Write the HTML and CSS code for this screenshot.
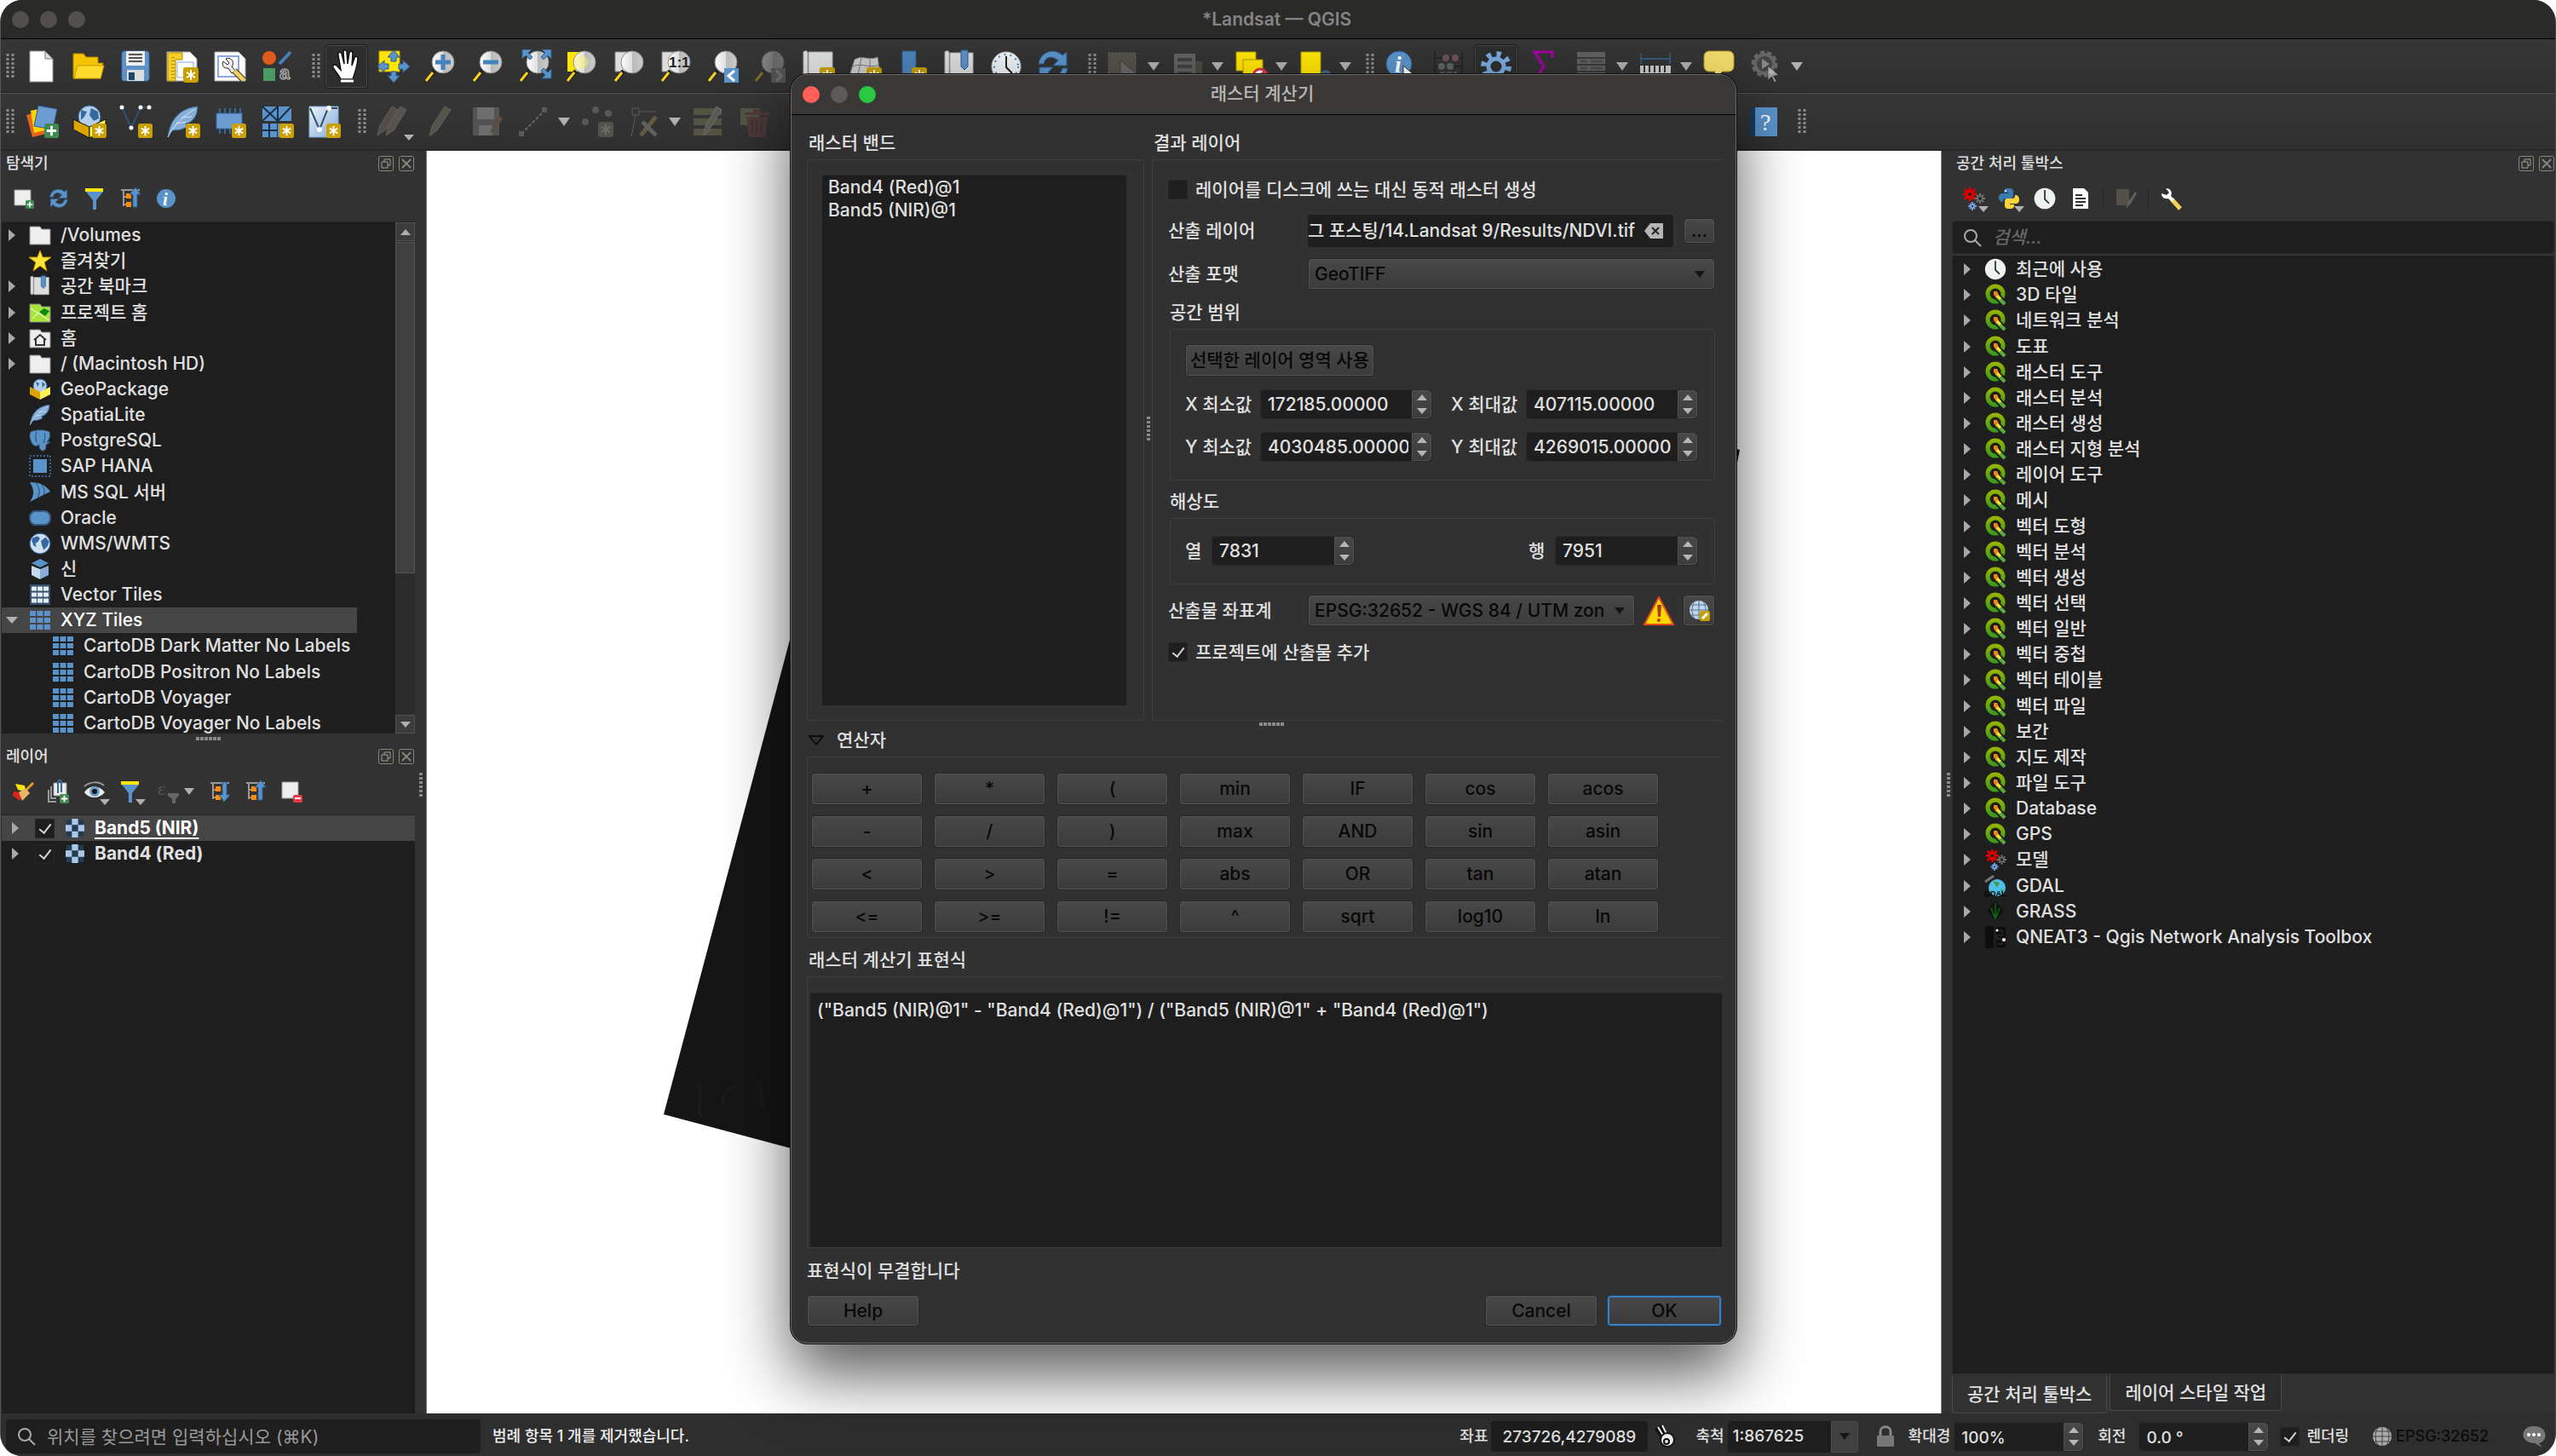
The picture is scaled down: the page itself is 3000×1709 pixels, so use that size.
FILE: index.html
```html
<!DOCTYPE html>
<html lang="ko">
<head>
<meta charset="utf-8">
<title>*Landsat — QGIS</title>
<meta name="viewport" content="width=device-width, initial-scale=1">
<link rel="stylesheet" href="styles.css">
</head>
<body>
<svg class="defs" aria-hidden="true">
  <defs>
    <linearGradient id="gLens" x1="0" x2="1"><stop offset="0" stop-color="#fff"/><stop offset=".5" stop-color="#ddd"/><stop offset=".52" stop-color="#b9b9b9"/><stop offset="1" stop-color="#ccc"/></linearGradient>
    <linearGradient id="gQ" x1="0" y1="0" x2="0" y2="1"><stop offset="0" stop-color="#93b300"/><stop offset="1" stop-color="#3f9a1c"/></linearGradient>
    <linearGradient id="gSky" x1="0" y1="0" x2="1" y2="1"><stop offset="0" stop-color="#eef4fb"/><stop offset="1" stop-color="#7fa9d6"/></linearGradient>
  </defs>
  <symbol id="grip" viewBox="0 0 10 30"><path d="M2 0v30M8 0v30" stroke="#8b8b8b" stroke-width="3" stroke-dasharray="3 2"/></symbol>
  <symbol id="badge" viewBox="0 0 18 18"><rect width="18" height="18" rx="3" fill="#c9a000"/><path d="M9 3v12M4 6l10 6M14 6l-10 6" stroke="#fff" stroke-width="2"/></symbol>
  <symbol id="plus" viewBox="0 0 18 18"><rect width="18" height="18" rx="3" fill="#3f8a50"/><path d="M9 3v12M3 9h12" stroke="#fff" stroke-width="3"/></symbol>
  <symbol id="lens" viewBox="0 0 40 40"><path d="M3 37L13 25" stroke="#222" stroke-width="5"/><path d="M3 37L11 27" stroke="#fcd21c" stroke-width="3"/><circle cx="23" cy="15" r="13" fill="url(#gLens)" stroke="#8d8d8d"/></symbol>
  <symbol id="globe" viewBox="0 0 24 24"><circle cx="12" cy="12" r="11" fill="#cfe0f3" stroke="#2d5f94"/><path d="M4 6l5-2 3 2-2 4-3 2 1 4-3-2-2-5zM13 9l5-4 4 5-2 5-4 4-2-5z" fill="#35689d"/></symbol>
  <symbol id="cursor" viewBox="0 0 16 22"><path d="M1 1l14 12-7 1 4 6-3 2-3-7-5 4z" fill="#fff" stroke="#333"/></symbol>

  <symbol id="new" viewBox="0 0 40 40"><path d="M7 2h18l9 9v27H7z" fill="#fff" stroke="#999"/><path d="M25 2v9h9z" fill="#ddd" stroke="#777"/></symbol>
  <symbol id="open" viewBox="0 0 40 40"><path d="M3 34V5h12l3 4h14v7l6 0-3 18z" fill="#f5c400" stroke="#b18a00"/><path d="M4 34l4-15h31l-4 15z" fill="#ffdb2e" stroke="#c79c00"/></symbol>
  <symbol id="save" viewBox="0 0 40 40"><rect x="4" y="2" width="32" height="35" rx="3" fill="#5f93c8" stroke="#3b6ea3"/><rect x="9" y="2" width="22" height="17" fill="#eee"/><path d="M12 6h16M12 10h16M12 14h16" stroke="#555" stroke-width="2"/><rect x="10" y="24" width="20" height="13" fill="#ddd"/><rect x="12" y="27" width="7" height="9" fill="#1f4469"/></symbol>
  <symbol id="layout" viewBox="0 0 40 40"><path d="M2 3h27l8 8v26H2z" fill="#fff" stroke="#aaa"/><path d="M3 4h17v8h-8v25H3z" fill="#f8cf2a" stroke="#b18a00"/><path d="M14 15h19v18H14z" fill="none" stroke="#8aa8e8"/><path d="M9 9v26" stroke="#b18a00" stroke-width="4" stroke-dasharray="1 3"/><use href="#badge" x="21" y="21" width="18" height="18"/></symbol>
  <symbol id="layouts" viewBox="0 0 40 40"><path d="M2 3h28l8 8v26H2z" fill="#fff" stroke="#aaa"/><path d="M6 8h24v24H6z" fill="none" stroke="#8aa8e8" stroke-width="2"/><path d="M15 11c7-3 11 5 7 9l4 5-4 3-4-6c-6 1-8-4-6-8l5 4 2-2z" fill="#eee" stroke="#222"/><path d="M25 25l11 11" stroke="#333" stroke-width="7"/><path d="M25 25l11 11" stroke="#f3d35a" stroke-width="5"/></symbol>
  <symbol id="style" viewBox="0 0 40 40"><circle cx="11" cy="10" r="8" fill="#df5a1d"/><path d="M23 17L36 3" stroke="#4580b8" stroke-width="4"/><rect x="4" y="22" width="14" height="15" fill="#4b9a66"/></symbol>
  <symbol id="hand" viewBox="0 0 40 40"><path d="M13 35c-2-4-7-10-9-14-1-3 2-4 4-2l5 5L10 7c-1-4 3-5 4-2l3 12-1-14c0-3 4-3 4 0l1 14 2-13c1-3 4-2 4 1l-1 14 3-9c1-3 4-2 4 1-1 10-3 15-6 24z" fill="#fff" stroke="#111" stroke-width="1.500"/><path d="M13 37h15" stroke="#fff" stroke-width="3"/></symbol>
  <symbol id="pansel" viewBox="0 0 40 40"><path d="M3 2h24v24H3z" fill="#ffe600" stroke="#c9a000"/><path d="M20 1l7 8h-4v5h-6V9h-4zM20 39l7-8h-4v-5h-6v5h-4zM1 20l8-7v4h5v6H9v4zM39 20l-8-7v4h-5v6h5v4z" fill="#5a93c9" stroke="#2c5c8e"/></symbol>
  <symbol id="zin" viewBox="0 0 40 40"><use href="#lens"/><path d="M23 6v18M14 15h18" stroke="#4682bd" stroke-width="5"/></symbol>
  <symbol id="zout" viewBox="0 0 40 40"><use href="#lens"/><path d="M14 15h18" stroke="#4682bd" stroke-width="5"/></symbol>
  <symbol id="zfull" viewBox="0 0 40 40"><use href="#lens"/><path d="M5 0h11l-4 4 5 5-3 3-5-5-4 4zM39 0v11l-4-4-5 5-3-3 5-5-4-4zM39 34H28l4-4-5-5 3-3 5 5 4-4z" fill="#5a93c9" stroke="#2c5c8e"/></symbol>
  <symbol id="zsel" viewBox="0 0 40 40"><path d="M3 3h22v23H3z" fill="#ffe600"/><use href="#lens"/><circle cx="19" cy="15" r="8" fill="#fff36b" opacity=".5"/></symbol>
  <symbol id="zlayer" viewBox="0 0 40 40"><path d="M3 3h22v23H3z" fill="#ddd" stroke="#888"/><use href="#lens"/></symbol>
  <symbol id="zlast" viewBox="0 0 40 40"><use href="#lens"/><rect x="21" y="22" width="17" height="17" fill="#5a93c9"/><path d="M33 25l-7 6 7 6" stroke="#fff" stroke-width="3" fill="none"/></symbol>
  <symbol id="znext" viewBox="0 0 40 40"><use href="#lens"/><rect x="21" y="22" width="17" height="17" fill="#888"/><path d="M27 25l6 6-6 6" stroke="#ccc" stroke-width="3" fill="none"/></symbol>
  <symbol id="mapnew" viewBox="0 0 40 40"><path d="M3 3c4-3 5 0 5 2v28c-3 4-5 1-5-1zM9 3h28v32H9z" fill="#ddd" stroke="#aaa"/><use href="#badge" x="22" y="21" width="18" height="18"/></symbol>
  <symbol id="map3d" viewBox="0 0 40 40"><path d="M8 12c8-6 18 2 27-3l3 20c-12 5-22-3-36 2z" fill="#ccc" stroke="#888"/><path d="M6 20c10-5 20 3 31-2M16 10l-4 20M26 11v20" stroke="#777" fill="none"/><use href="#badge" x="22" y="21" width="18" height="18"/></symbol>
  <symbol id="bmnew" viewBox="0 0 40 40"><path d="M9 2h16v32l-8-5-8 5z" fill="#4c83b9" stroke="#2c5c8e"/><use href="#badge" x="20" y="21" width="18" height="18"/></symbol>
  <symbol id="bm" viewBox="0 0 40 40"><path d="M3 3c4-3 5 0 5 2v28c-3 4-5 1-5-1zM9 4h27v31H9z" fill="#ddd" stroke="#aaa"/><path d="M22 1h8v19l-4 4-4-4z" fill="#5a93c9" stroke="#2c5c8e"/></symbol>
  <symbol id="clock" viewBox="0 0 40 40"><circle cx="20" cy="20" r="17" fill="#eef2f2" stroke="#bbb"/><path d="M20 8v13l7 7" fill="none" stroke="#222" stroke-width="2"/><circle cx="20" cy="20" r="14" fill="none" stroke="#4682bd" stroke-width="2" stroke-dasharray="2 5"/></symbol>
  <symbol id="refresh" viewBox="0 0 40 40"><path d="M3 17C5 2 22-2 31 7l5-4v16H20l6-6C19 7 11 8 9 17z" fill="#5a93c9" stroke="#2c5c8e"/><path d="M37 22C35 37 18 42 9 32l-5 4V21h16l-6 6c7 6 15 4 17-5z" fill="#5a93c9" stroke="#2c5c8e"/></symbol>
  <symbol id="select" viewBox="0 0 40 40"><path d="M3 4h32v28H3z" fill="#8a836b" stroke="#bbb" stroke-dasharray="2 2"/><path d="M17 13l20 16-9 1 4 8-5 2-4-8-6 5z" fill="#bbb" stroke="#555"/></symbol>
  <symbol id="form" viewBox="0 0 40 40"><path d="M26 14h12v22H26z" fill="#77705a"/><path d="M5 5h25v31H5z" fill="#aaa"/><path d="M9 12h17M9 20h17M9 28h17" stroke="#555" stroke-width="4"/></symbol>
  <symbol id="desel" viewBox="0 0 40 40"><path d="M3 3h23v22H3z" fill="#ffe600" stroke="#b19a00"/><path d="M11 12h23v22H11z" fill="#ffe600" stroke="#b19a00"/><circle cx="31" cy="31" r="8" fill="#fff" stroke="#dc3545" stroke-width="3"/><path d="M26 36l10-10" stroke="#dc3545" stroke-width="3"/></symbol>
  <symbol id="selval" viewBox="0 0 40 40"><path d="M4 3h23v30H4z" fill="#ffe600" stroke="#b19a00"/><circle cx="33" cy="31" r="5" fill="none" stroke="#3f6f9c" stroke-width="3"/></symbol>
  <symbol id="abacus" viewBox="0 0 40 40"><path d="M4 2v36M36 2v36M4 10h32M4 20h32M4 30h32" stroke="#111" stroke-width="2"/><circle cx="17" cy="10" r="4" fill="#b8a"/><circle cx="28" cy="10" r="4" fill="#c88"/><circle cx="12" cy="20" r="4" fill="#9ba"/><circle cx="22" cy="20" r="4" fill="#9ba"/><path d="M10 30h20" stroke="#888" stroke-width="8" stroke-dasharray="6 2"/></symbol>
  <symbol id="gear" viewBox="0 0 40 40"><circle cx="20" cy="20" r="14" fill="none" stroke="#78aade" stroke-width="8" stroke-dasharray="5 6"/><circle cx="20" cy="20" r="9" fill="#2d2d2d" stroke="#78aade" stroke-width="5"/></symbol>
  <symbol id="sigma" viewBox="0 0 40 40"><path d="M30 10V3H9l11 17L9 37h21v-7" fill="none" stroke="#a800a8" stroke-width="3"/></symbol>
  <symbol id="table" viewBox="0 0 40 40"><path d="M3 3h33v34H3z" fill="#aaa"/><path d="M3 10h33M3 18h33M3 26h33" stroke="#444" stroke-width="2"/><path d="M7 14h8M19 14h14M7 22h8M19 22h14M7 30h8M19 30h14" stroke="#777" stroke-width="3"/></symbol>
  <symbol id="ruler" viewBox="0 0 40 40"><path d="M3 5v12M37 5v12M3 11h34" stroke="#34577a" stroke-width="2"/><path d="M2 19h36v14H2z" fill="#ccc"/><path d="M7 19v8M13 19v8M19 19v8M25 19v8M31 19v8" stroke="#333" stroke-width="2"/></symbol>
  <symbol id="tip" viewBox="0 0 40 40"><rect x="2" y="2" width="35" height="24" rx="6" fill="#f2dc6b" stroke="#b59a20"/><path d="M15 25v12l9-12z" fill="#f2dc6b"/><circle cx="10" cy="36" r="4" fill="#8bc28b"/></symbol>
  <symbol id="action" viewBox="0 0 40 40"><circle cx="18" cy="17" r="13" fill="#666" stroke="#666" stroke-width="5" stroke-dasharray="5 3"/><circle cx="18" cy="17" r="9" fill="#444"/><path d="M15 11l9 6-9 6z" fill="#888"/><use href="#cursor" x="21" y="18" width="15" height="21" opacity=".5"/></symbol>

  <symbol id="source" viewBox="0 0 40 40"><path d="M1 12l14-4 9 26-16 4z" fill="#e8641b"/><path d="M6 7l14-3 6 25-16 4z" fill="#ffd400"/><path d="M15 1l22 4-5 24-22-4z" fill="#6b9bd0" stroke="#2c5c8e"/><use href="#plus" x="22" y="22" width="17" height="17"/></symbol>
  <symbol id="gpkg" viewBox="0 0 40 40"><circle cx="20" cy="14" r="13" fill="#b5cfea" stroke="#35689d"/><path d="M10 6l7 2-3 6-4 4zM22 4l8 4 1 8-6 3-5-7z" fill="#35689d"/><path d="M1 17l19 9v13L1 29z" fill="#dba400" stroke="#111"/><path d="M39 17l-19 9v13l19-10z" fill="#fff35c" stroke="#111"/><use href="#badge" x="23" y="22" width="17" height="17"/></symbol>
  <symbol id="shp" viewBox="0 0 40 40"><path d="M3 3l11 24L25 3h11" fill="none" stroke="#31506d" stroke-width="2"/><circle cx="3" cy="3" r="2.500" fill="#fff"/><circle cx="14" cy="27" r="2.500" fill="#fff"/><circle cx="25" cy="3" r="2.500" fill="#fff"/><circle cx="35" cy="3" r="2.500" fill="#fff"/><use href="#badge" x="22" y="22" width="17" height="17"/></symbol>
  <symbol id="feather" viewBox="0 0 40 40"><path d="M2 38C4 20 14 4 37 2c0 10-5 16-10 19l-4 1 1 4c-6 4-12 4-17 4z" fill="#86add6" stroke="#35689d"/><path d="M2 38C8 26 18 14 34 5M12 22l12-2M18 15l12-1" fill="none" stroke="#d8e6f4"/></symbol>
  <symbol id="feathernew" viewBox="0 0 40 40"><use href="#feather"/><use href="#badge" x="23" y="22" width="17" height="17"/></symbol>
  <symbol id="chip" viewBox="0 0 40 40"><path d="M8 4v30M14 4v30M20 4v30M26 4v30M32 4v30" stroke="#35689d" stroke-width="2"/><rect x="4" y="10" width="30" height="18" fill="#6b9bd0" stroke="#35689d"/><use href="#badge" x="22" y="22" width="17" height="17"/></symbol>
  <symbol id="mesh" viewBox="0 0 40 40"><path d="M3 2h34v17H3zM3 22h17v16H3zM21 22h16v16H21z" fill="#5a93c9"/><path d="M3 2l18 17M21 2L3 19M21 19L37 2M21 2v17M3 30h18M11 22v16" stroke="#17304a" stroke-width="2"/><use href="#badge" x="23" y="22" width="17" height="17"/></symbol>
  <symbol id="virt" viewBox="0 0 40 40"><path d="M3 2h34v36H3z" fill="url(#gSky)" stroke="#7fa9d6"/><path d="M4 4l11 25L25 4h11" fill="none" stroke="#31506d" stroke-width="2"/><circle cx="15" cy="29" r="3" fill="#fff"/><circle cx="26" cy="4" r="3" fill="#fff"/><use href="#badge" x="23" y="22" width="17" height="17"/></symbol>
  <symbol id="pencil" viewBox="0 0 40 40"><path d="M8 37l3-12L26 2l7 4-16 24z" fill="#8b8a70" stroke="#aaa"/></symbol>
  <symbol id="pencils" viewBox="0 0 40 40"><path d="M2 36l3-12L19 2l7 4-15 24z" fill="#8d7566" stroke="#aaa"/><path d="M12 36l3-12L29 2l7 4-15 24z" fill="#978376" stroke="#aaa"/></symbol>
  <symbol id="saveed" viewBox="0 0 40 40"><path d="M4 3h31v33H4z" fill="#888"/><path d="M9 3h20v14H9zM11 24h16v12H11z" fill="#ccc"/><path d="M24 34l3-9 8-12 4 3-8 13z" fill="#a07a60"/></symbol>
  <symbol id="line" viewBox="0 0 40 40"><path d="M6 34L33 7" stroke="#bbb" stroke-width="2" stroke-dasharray="4 2"/><path d="M3 31h6v6H3zM30 3h6v6h-6z" fill="#999"/></symbol>
  <symbol id="points" viewBox="0 0 40 40"><circle cx="6" cy="20" r="4" fill="#8a9a90"/><circle cx="18" cy="6" r="4" fill="#8a9a90"/><circle cx="33" cy="10" r="4" fill="#8a9a90"/><rect x="21" y="20" width="18" height="18" rx="3" fill="#8b8a70"/><path d="M30 23v12M25 26l10 6M35 26l-10 6" stroke="#ccc" stroke-width="2"/></symbol>
  <symbol id="tools" viewBox="0 0 40 40"><path d="M6 4h8v8H6zM14 8h20M10 12L5 37" stroke="#999" stroke-width="1" fill="none"/><path d="M16 36l18-22" stroke="#b09a60" stroke-width="5"/><path d="M34 36L18 20" stroke="#aaa" stroke-width="5"/></symbol>
  <symbol id="rows" viewBox="0 0 40 40"><path d="M3 4h33v8H3zM3 16h33v8H3zM3 28h33v8H3z" fill="#8b8a60"/><path d="M15 36l2-11L30 2l6 4-15 24z" fill="#998" stroke="#ccc"/></symbol>
  <symbol id="trash" viewBox="0 0 40 40"><path d="M3 4h22v20H3z" fill="#8b8a60"/><path d="M10 14h25l-3 24H13zM8 9h29v3H8zM18 5h9v4h-9z" fill="#7c4646"/><path d="M17 17v17M22 17v17M28 17v17" stroke="#533" stroke-width="2"/></symbol>
  <symbol id="help" viewBox="0 0 40 40"><path d="M3 3h33v34H3z" fill="#1b3a5a"/><path d="M10 3h26v34H10z" fill="#5a93c9"/></symbol>

  <symbol id="add" viewBox="0 0 28 28"><path d="M4 4h19v18H4z" fill="#eeeeec" stroke="#999"/><use href="#plus" x="17" y="16" width="10" height="10"/></symbol>
  <symbol id="filter" viewBox="0 0 28 28"><path d="M4 6h20l-8 10v11h-4V16z" fill="#5a93c9"/><path d="M3 2h21v4H3z" fill="#ffe600"/></symbol>
  <symbol id="collapse" viewBox="0 0 28 28"><path d="M3 4h22M6 4v19M6 12h5M6 21h5" stroke="#999" stroke-width="2" fill="none"/><path d="M9 8h6v6H9zM9 18h6v6H9z" fill="#ff8c00"/><path d="M20 1l6 8h-4v15h-5V9h-4z" fill="#5a93c9" stroke="#2c5c8e"/></symbol>
  <symbol id="expand" viewBox="0 0 28 28"><path d="M3 4h22M6 4v19M6 12h5M6 21h5" stroke="#999" stroke-width="2" fill="none"/><path d="M9 8h6v6H9zM9 18h6v6H9z" fill="#ff8c00"/><path d="M19 26l7-8h-4V3h-5v15h-4z" fill="#5a93c9" stroke="#2c5c8e"/></symbol>
  <symbol id="brush" viewBox="0 0 28 28"><path d="M5 5l11 2 1 7-9-2z" fill="#ffe600"/><path d="M3 14l8 1v10L2 19z" fill="#e2231a"/><path d="M9 15l8-5 5 6-9 9z" fill="#e8b468"/><path d="M18 12l8-8" stroke="#e89a28" stroke-width="3"/></symbol>
  <symbol id="addgrp" viewBox="0 0 28 28"><path d="M2 12v14h9M5 8v14h6" fill="none" stroke="#999" stroke-width="2"/><path d="M8 4h15v15H8z" fill="#eee" stroke="#999"/><path d="M13 16V3c0-3 4-3 4 0v12" fill="none" stroke="#35689d" stroke-width="2"/><use href="#plus" x="15" y="17" width="11" height="11"/></symbol>
  <symbol id="eye" viewBox="0 0 28 28"><path d="M2 15c6-9 17-9 24 0-7 8-18 8-24 0z" fill="#eee"/><circle cx="14" cy="14" r="6" fill="#6b9bd0"/><circle cx="14" cy="14" r="3" fill="#111"/><path d="M2 8c7-6 17-6 23-1" fill="none" stroke="#999" stroke-width="2"/></symbol>
  <symbol id="remove" viewBox="0 0 28 28"><path d="M3 3h19v19H3z" fill="#eee" stroke="#999"/><rect x="16" y="18" width="11" height="9" rx="2" fill="#e63946"/><path d="M18 22h7" stroke="#fff" stroke-width="2"/></symbol>
  <symbol id="gears" viewBox="0 0 28 28"><path d="M10 1v16M2 9h16M4 3l12 12M16 3L4 15" stroke="#e00000" stroke-width="3"/><circle cx="10" cy="9" r="5" fill="#e00000"/><circle cx="10" cy="9" r="2" fill="#222"/><path d="M22 8v12M16 14h12M18 10l8 8M26 10l-8 8" stroke="#777" stroke-width="2"/><circle cx="22" cy="14" r="2" fill="#222"/><path d="M13 18v10M8 23h10M10 20l6 6M16 20l-6 6" stroke="#6f9fdf" stroke-width="2"/><circle cx="13" cy="23" r="1" fill="#222"/></symbol>
  <symbol id="python" viewBox="0 0 28 28"><path d="M13 2c6 0 6 2 6 5v4c0 2-1 3-3 3h-6c-2 0-3 1-3 4H5c-4-2-4-9 0-10h8V7H8c0-4 1-5 5-5z" fill="#3b7ab0"/><path d="M15 26c-6 0-6-2-6-5v-4c0-2 1-3 3-3h6c2 0 3-1 3-4h2c4 2 4 9 0 10h-8v1h5c0 4-1 5-5 5z" fill="#ffd43b"/><circle cx="10" cy="5" r="1" fill="#fff"/></symbol>
  <symbol id="doc" viewBox="0 0 28 28"><path d="M5 2h13l5 5v19H5z" fill="#fff"/><path d="M8 10h8M8 14h12M8 18h12M8 22h9" stroke="#333" stroke-width="2"/></symbol>
  <symbol id="edit" viewBox="0 0 28 28"><path d="M3 3h15v19H3z" fill="#8a836b"/><path d="M14 26l3-8 8-12 2 2-8 13z" fill="#aaa"/></symbol>
  <symbol id="wrench" viewBox="0 0 28 28"><path d="M15 15l10 11" stroke="#f3d35a" stroke-width="5"/><path d="M8 2c6 0 8 5 6 9l4 4-3 3-4-4c-4 1-8-1-8-6l6 2 3-3z" fill="#fff"/></symbol>
  <symbol id="float" viewBox="0 0 18 18"><rect x=".5" y=".5" width="17" height="17" rx="2" fill="none" stroke="#8a857c"/><path d="M4 7h7v7H4zM7 7V4h7v7h-3" fill="none" stroke="#a5a098"/></symbol>
  <symbol id="close" viewBox="0 0 18 18"><rect x=".5" y=".5" width="17" height="17" rx="2" fill="none" stroke="#8a857c"/><path d="M4 4l10 10M14 4L4 14" stroke="#8a857c" stroke-width="2"/></symbol>
  <symbol id="search" viewBox="0 0 24 24"><circle cx="10" cy="10" r="7" fill="none" stroke="#aaa" stroke-width="2"/><path d="M15 15l7 7" stroke="#aaa" stroke-width="2"/></symbol>

  <symbol id="t-folder" viewBox="0 0 26 26"><path d="M1 3h12l2 3h10v18H1z" fill="#eeeeec" stroke="#888"/></symbol>
  <symbol id="t-star" viewBox="0 0 26 26"><path d="M13 1l3 8h10l-8 6 3 10-8-6-8 6 3-10-8-6h10z" fill="#ffe535" stroke="#c9a000"/></symbol>
  <symbol id="t-home" viewBox="0 0 26 26"><use href="#t-folder"/><path d="M6 15l7-6 7 6M8 14v7h10v-7" fill="none" stroke="#333" stroke-width="2"/></symbol>
  <symbol id="t-proj" viewBox="0 0 26 26"><path d="M1 3h12l2 3h10v18H1z" fill="#a8e43a" stroke="#888"/><path d="M2 8l22 14M4 20l8-8" stroke="#fff"/><path d="M12 12l6-4 6 3-5 6z" fill="#0a8a0a"/></symbol>
  <symbol id="t-gpkg" viewBox="0 0 26 26"><circle cx="13" cy="9" r="8" fill="#b5cfea" stroke="#35689d"/><path d="M8 4l4 2-2 4zM15 4l4 3-3 4z" fill="#35689d"/><path d="M1 10l12 6v9L1 19z" fill="#dba400"/><path d="M25 10l-12 6v9l12-6z" fill="#fff35c"/></symbol>
  <symbol id="t-pg" viewBox="0 0 26 26"><path d="M2 3c6-3 16-3 22 0 2 5-1 10-3 12h4l-5 3c0 5-1 7-4 7s-4-3-4-7c-3 2-6 2-8-1C1 12 0 7 2 3z" fill="#5a93c9" stroke="#35587c"/><path d="M9 3c-2 4-1 8 0 12M18 4c2 4 0 8-1 12" fill="none" stroke="#27486a"/></symbol>
  <symbol id="t-hana" viewBox="0 0 26 26"><rect x="1" y="1" width="24" height="24" fill="none" stroke="#3c6692" stroke-width="2" stroke-dasharray="2 2"/><rect x="5" y="5" width="16" height="16" fill="#5a93c9"/></symbol>
  <symbol id="t-ms" viewBox="0 0 26 26"><path d="M1 1c10 0 19 3 24 11L1 24c6-8 5-15 0-23z" fill="#5a93c9"/><path d="M8 2c5 5 5 13 2 17M15 4c3 4 4 9 2 12" fill="none" stroke="#27486a"/></symbol>
  <symbol id="t-ora" viewBox="0 0 26 26"><rect x="1" y="5" width="24" height="16" rx="7" fill="#5a93c9" stroke="#35587c" stroke-width="2"/></symbol>
  <symbol id="t-cube" viewBox="0 0 26 26"><path d="M13 1l10 5-10 5L3 6z" fill="#5a93c9"/><path d="M3 9l10 4v12L3 20z" fill="#c5d9ee"/><path d="M23 9l-10 4v12l10-5z" fill="#86add6"/></symbol>
  <symbol id="t-vt" viewBox="0 0 26 26"><path d="M1 1h24v24H1z" fill="#35506d"/><path d="M3 6h20M3 13h20M3 20h20" stroke="#e4eefa" stroke-width="5" stroke-dasharray="6 1"/></symbol>
  <symbol id="t-xyz" viewBox="0 0 26 26"><path d="M1 5h24M1 13h24M1 21h24" stroke="#5a93c9" stroke-width="6" stroke-dasharray="7 1.500"/></symbol>
  <symbol id="t-q" viewBox="0 0 26 26"><circle cx="13" cy="12" r="9" fill="none" stroke="url(#gQ)" stroke-width="5"/><path d="M14 14l11 11" stroke="#1e1e1e" stroke-width="8"/><path d="M14 14l10 10" stroke="#5cab3c" stroke-width="4"/><path d="M11 9h4l3 7-3 1-4-4z" fill="#f08423"/><path d="M15 14l4 4" stroke="#ffe52e" stroke-width="3"/></symbol>
  <symbol id="t-grass" viewBox="0 0 26 26"><path d="M13 1l10 11-10 11L3 12z" fill="#121212"/><path d="M13 3v18M8 9l5 12 5-12M10 15l3 6 3-6" fill="none" stroke="#0a6a16" stroke-width="1.500"/></symbol>
  <symbol id="t-qneat" viewBox="0 0 26 26"><path d="M1 0h10v26H1zM14 1h11v24H14z" fill="#0d0d0d"/><path d="M15 5h6v6h-6v4h6v6h-6" fill="none" stroke="#222" stroke-width="2"/><circle cx="15" cy="5" r="1.500" fill="#fff"/><circle cx="23" cy="16" r="2" fill="#fff"/></symbol>
  <symbol id="t-raster" viewBox="0 0 24 24"><path d="M1 1h22v22H1z" fill="#263a50"/><path d="M8 0h8v8H8zM0 8h8v8H0zM16 8h8v8h-8zM8 16h8v8H8z" fill="#a9c8ea"/></symbol>
</svg>

<div class="app">
  <header class="titlebar">
    <span class="lights"><i></i><i></i><i></i></span>
    <h1>*Landsat — QGIS</h1>
  </header>

  <div class="toolbar">
    <svg class="grip"><use href="#grip"/></svg>
    <div class="tools t6">
      <button aria-label="새 프로젝트"><svg><use href="#new"/></svg></button>
      <button aria-label="열기"><svg><use href="#open"/></svg></button>
      <button aria-label="저장"><svg><use href="#save"/></svg></button>
      <button aria-label="새 조판"><svg><use href="#layout"/></svg></button>
      <button aria-label="조판 관리자"><svg><use href="#layouts"/></svg></button>
      <button aria-label="스타일 관리자"><svg><use href="#style"/><text x="23" y="35" font-family="Liberation Sans" font-size="22" font-weight="bold" fill="#555" stroke="#bbb">a</text></svg></button>
    </div>
    <svg class="grip wide"><use href="#grip"/></svg>
    <div class="tools t16">
      <button class="on" aria-label="이동"><svg><use href="#hand"/></svg></button>
      <button aria-label="선택으로 이동"><svg><use href="#pansel"/></svg></button>
      <button aria-label="확대"><svg><use href="#zin"/></svg></button>
      <button aria-label="축소"><svg><use href="#zout"/></svg></button>
      <button aria-label="전체 보기"><svg><use href="#zfull"/></svg></button>
      <button aria-label="선택으로 확대"><svg><use href="#zsel"/></svg></button>
      <button aria-label="레이어로 확대"><svg><use href="#zlayer"/></svg></button>
      <button aria-label="원본 해상도"><svg><use href="#zlayer"/><text x="11" y="21" font-family="Liberation Sans" font-size="17" font-weight="bold" fill="#222">1:1</text></svg></button>
      <button aria-label="이전 보기"><svg><use href="#zlast"/></svg></button>
      <button class="off" aria-label="다음 보기"><svg><use href="#znext"/></svg></button>
      <button aria-label="새 맵"><svg><use href="#mapnew"/></svg></button>
      <button aria-label="새 3D 맵"><svg><use href="#map3d"/></svg></button>
      <button aria-label="새 북마크"><svg><use href="#bmnew"/></svg></button>
      <button aria-label="북마크"><svg><use href="#bm"/></svg></button>
      <button aria-label="시간"><svg><use href="#clock"/></svg></button>
      <button aria-label="새로고침"><svg><use href="#refresh"/></svg></button>
    </div>
    <svg class="grip wide"><use href="#grip"/></svg>
    <button class="split off" aria-label="선택"><svg><use href="#select"/></svg></button>
    <button class="split off" aria-label="값으로 선택"><svg><use href="#form"/></svg></button>
    <button class="split" aria-label="선택 해제"><svg><use href="#desel"/></svg></button>
    <button class="split" aria-label="위치로 선택"><svg><use href="#selval"/></svg></button>
    <svg class="grip wide"><use href="#grip"/></svg>
    <div class="tools t4">
      <button aria-label="식별"><svg><circle cx="18" cy="17" r="15" fill="#5a93c9" stroke="#2c5c8e"/><text x="13" y="27" font-family="Liberation Serif" font-size="28" font-style="italic" font-weight="bold" fill="#fff">i</text><use href="#cursor" x="22" y="18" width="16" height="22"/></svg></button>
      <button class="off" aria-label="계산기"><svg><use href="#abacus"/></svg></button>
      <button class="on" aria-label="툴박스"><svg><use href="#gear"/></svg></button>
      <button aria-label="통계"><svg><use href="#sigma"/></svg></button>
    </div>
    <button class="split off" aria-label="속성 테이블"><svg><use href="#table"/></svg></button>
    <button class="split" aria-label="측정"><svg><use href="#ruler"/></svg></button>
    <button class="one" aria-label="맵 도움말"><svg><use href="#tip"/></svg></button>
    <button class="split" aria-label="액션"><svg><use href="#action"/></svg></button>
  </div>

  <div class="toolbar second">
    <svg class="grip"><use href="#grip"/></svg>
    <div class="tools t7">
      <button aria-label="데이터 소스"><svg><use href="#source"/></svg></button>
      <button aria-label="새 GeoPackage"><svg><use href="#gpkg"/></svg></button>
      <button aria-label="새 Shapefile"><svg><use href="#shp"/></svg></button>
      <button aria-label="새 SpatiaLite"><svg><use href="#feathernew"/></svg></button>
      <button aria-label="새 임시 레이어"><svg><use href="#chip"/></svg></button>
      <button aria-label="새 메시"><svg><use href="#mesh"/></svg></button>
      <button aria-label="새 가상 레이어"><svg><use href="#virt"/></svg></button>
    </div>
    <svg class="grip wide"><use href="#grip"/></svg>
    <button class="one off menu" aria-label="현재 편집"><svg><use href="#pencils"/></svg></button>
    <button class="one off" aria-label="편집 토글"><svg><use href="#pencil"/></svg></button>
    <button class="one off" aria-label="편집 저장"><svg><use href="#saveed"/></svg></button>
    <button class="split off" aria-label="디지타이즈"><svg><use href="#line"/></svg></button>
    <button class="one off" aria-label="포인트 추가"><svg><use href="#points"/></svg></button>
    <button class="split off" aria-label="꼭짓점 도구"><svg><use href="#tools"/></svg></button>
    <button class="one off" aria-label="속성 수정"><svg><use href="#rows"/></svg></button>
    <button class="one off" aria-label="삭제"><svg><use href="#trash"/></svg></button>
    <button class="one far" aria-label="도움말"><svg><use href="#help"/><text x="16" y="30" font-family="Liberation Serif" font-size="28" fill="#fff">?</text></svg></button>
    <svg class="grip wide"><use href="#grip"/></svg>
  </div>

  <main class="work">
    <aside class="dock left">
      <div class="dock-title"><h2>탐색기</h2><button aria-label="분리"><svg><use href="#float"/></svg></button><button aria-label="닫기"><svg><use href="#close"/></svg></button></div>
      <div class="dock-tools">
        <button aria-label="레이어 추가"><svg><use href="#add"/></svg></button>
        <button aria-label="새로고침"><svg viewBox="-3 -3 46 46"><use href="#refresh" width="40" height="40"/></svg></button>
        <button aria-label="필터"><svg><use href="#filter"/></svg></button>
        <button aria-label="모두 접기"><svg><use href="#collapse"/></svg></button>
        <button aria-label="정보"><svg><circle cx="14" cy="14" r="11" fill="#5a93c9"/><text x="10" y="22" font-family="Liberation Serif" font-size="21" font-style="italic" font-weight="bold" fill="#fff">i</text></svg></button>
      </div>
      <div class="browser">
        <ul class="tree rows20">
          <li><i class="tri"></i><svg><use href="#t-folder"/></svg>/Volumes</li>
          <li><i></i><svg><use href="#t-star"/></svg>즐겨찾기</li>
          <li><i class="tri"></i><svg><use href="#bm"/></svg>공간 북마크</li>
          <li><i class="tri"></i><svg><use href="#t-proj"/></svg>프로젝트 홈</li>
          <li><i class="tri"></i><svg><use href="#t-home"/></svg>홈</li>
          <li><i class="tri"></i><svg><use href="#t-folder"/></svg>/ (Macintosh HD)</li>
          <li><i></i><svg><use href="#t-gpkg"/></svg>GeoPackage</li>
          <li><i></i><svg><use href="#feather"/></svg>SpatiaLite</li>
          <li><i></i><svg><use href="#t-pg"/></svg>PostgreSQL</li>
          <li><i></i><svg><use href="#t-hana"/></svg>SAP HANA</li>
          <li><i></i><svg><use href="#t-ms"/></svg>MS SQL 서버</li>
          <li><i></i><svg><use href="#t-ora"/></svg>Oracle</li>
          <li><i></i><svg><use href="#globe"/></svg>WMS/WMTS</li>
          <li><i></i><svg><use href="#t-cube"/></svg>신</li>
          <li><i></i><svg><use href="#t-vt"/></svg>Vector Tiles</li>
          <li class="sel"><i class="tri open"></i><svg><use href="#t-xyz"/></svg>XYZ Tiles</li>
          <li class="child"><i></i><svg><use href="#t-xyz"/></svg>CartoDB Dark Matter No Labels</li>
          <li class="child"><i></i><svg><use href="#t-xyz"/></svg>CartoDB Positron No Labels</li>
          <li class="child"><i></i><svg><use href="#t-xyz"/></svg>CartoDB Voyager</li>
          <li class="child"><i></i><svg><use href="#t-xyz"/></svg>CartoDB Voyager No Labels</li>
        </ul>
        <div class="scroll"><button class="up" aria-label="위로"></button><i class="thumb"></i><button class="down" aria-label="아래로"></button></div>
      </div>
      <div class="hsplit"><i class="dots"></i></div>
      <div class="dock-title"><h2>레이어</h2><button aria-label="분리"><svg><use href="#float"/></svg></button><button aria-label="닫기"><svg><use href="#close"/></svg></button></div>
      <div class="dock-tools">
        <button aria-label="스타일"><svg><use href="#brush"/></svg></button>
        <button aria-label="그룹 추가"><svg><use href="#addgrp"/></svg></button>
        <button class="menu" aria-label="가시성"><svg><use href="#eye"/></svg></button>
        <button class="menu" aria-label="필터"><svg><use href="#filter"/></svg></button>
        <button class="split2" aria-label="표현식 필터"><svg><text x="2" y="18" font-family="Liberation Serif" font-size="22" fill="#555">ε</text><path d="M14 16h13v3l-4 4v5h-4v-5l-5-4z" fill="#666"/></svg></button>
        <button aria-label="모두 펼치기"><svg><use href="#expand"/></svg></button>
        <button aria-label="모두 접기"><svg><use href="#collapse"/></svg></button>
        <button aria-label="제거"><svg><use href="#remove"/></svg></button>
      </div>
      <ul class="layers">
        <li class="sel"><i class="tri"></i><input type="checkbox" id="l5" checked><svg><use href="#t-raster"/></svg><label for="l5"><u>Band5 (NIR)</u></label></li>
        <li><i class="tri"></i><input type="checkbox" id="l4" checked><svg><use href="#t-raster"/></svg><label for="l4">Band4 (Red)</label></li>
      </ul>
      <i class="dots vert edge"></i>
    </aside>

    <section class="canvas">
      <svg viewBox="0 0 1778 1482" preserveAspectRatio="xMinYMin slice"><path d="M278 1131L426 574 548 115 1541 351 1538 366 1250 1390z" fill="#151515"/><path d="M318 1095c8 10-3 22 4 40M350 1120c-8-12 6-18 14-26M384 1090c12 6 8 20 10 34" fill="none" stroke="#1a1a1a" stroke-width="4"/></svg>
    </section>

    <aside class="dock right">
      <div class="dock-title"><h2>공간 처리 툴박스</h2><button aria-label="분리"><svg><use href="#float"/></svg></button><button aria-label="닫기"><svg><use href="#close"/></svg></button></div>
      <div class="dock-tools">
        <button class="menu" aria-label="모델"><svg><use href="#gears"/></svg></button>
        <button class="menu" aria-label="스크립트"><svg><use href="#python"/></svg></button>
        <button aria-label="기록"><svg viewBox="3 3 34 34"><circle cx="20" cy="20" r="15" fill="#eef2f2"/><path d="M20 8v13l6 6" fill="none" stroke="#222" stroke-width="2"/></svg></button>
        <button aria-label="결과"><svg><use href="#doc"/></svg></button>
        <i class="sep"></i>
        <button class="off" aria-label="편집"><svg><use href="#edit"/></svg></button>
        <i class="sep"></i>
        <button aria-label="옵션"><svg><use href="#wrench"/></svg></button>
      </div>
      <label class="search"><svg><use href="#search"/></svg><input type="text" placeholder="검색..." aria-label="검색"></label>
      <div class="toolbox">
        <ul class="tree rows27">
          <li><i class="tri"></i><svg viewBox="4 4 32 32"><circle cx="20" cy="20" r="15" fill="#eef2f2"/><path d="M20 8v13l6 6" fill="none" stroke="#222" stroke-width="2"/></svg>최근에 사용</li>
          <li><i class="tri"></i><svg><use href="#t-q"/></svg>3D 타일</li>
          <li><i class="tri"></i><svg><use href="#t-q"/></svg>네트워크 분석</li>
          <li><i class="tri"></i><svg><use href="#t-q"/></svg>도표</li>
          <li><i class="tri"></i><svg><use href="#t-q"/></svg>래스터 도구</li>
          <li><i class="tri"></i><svg><use href="#t-q"/></svg>래스터 분석</li>
          <li><i class="tri"></i><svg><use href="#t-q"/></svg>래스터 생성</li>
          <li><i class="tri"></i><svg><use href="#t-q"/></svg>래스터 지형 분석</li>
          <li><i class="tri"></i><svg><use href="#t-q"/></svg>레이어 도구</li>
          <li><i class="tri"></i><svg><use href="#t-q"/></svg>메시</li>
          <li><i class="tri"></i><svg><use href="#t-q"/></svg>벡터 도형</li>
          <li><i class="tri"></i><svg><use href="#t-q"/></svg>벡터 분석</li>
          <li><i class="tri"></i><svg><use href="#t-q"/></svg>벡터 생성</li>
          <li><i class="tri"></i><svg><use href="#t-q"/></svg>벡터 선택</li>
          <li><i class="tri"></i><svg><use href="#t-q"/></svg>벡터 일반</li>
          <li><i class="tri"></i><svg><use href="#t-q"/></svg>벡터 중첩</li>
          <li><i class="tri"></i><svg><use href="#t-q"/></svg>벡터 테이블</li>
          <li><i class="tri"></i><svg><use href="#t-q"/></svg>벡터 파일</li>
          <li><i class="tri"></i><svg><use href="#t-q"/></svg>보간</li>
          <li><i class="tri"></i><svg><use href="#t-q"/></svg>지도 제작</li>
          <li><i class="tri"></i><svg><use href="#t-q"/></svg>파일 도구</li>
          <li><i class="tri"></i><svg><use href="#t-q"/></svg>Database</li>
          <li><i class="tri"></i><svg><use href="#t-q"/></svg>GPS</li>
          <li><i class="tri"></i><svg><use href="#gears"/></svg>모델</li>
          <li><i class="tri"></i><svg viewBox="0 0 26 26"><circle cx="15" cy="15" r="10" fill="#4cc0ea"/><path d="M10 7l8 2-3 6zM19 16l4 2-3 5z" fill="#4a9a4a"/><path d="M1 8l10-7" stroke="#777" stroke-width="3"/><text x="0" y="25" font-family="Liberation Sans" font-size="9" font-weight="bold">GDAL</text></svg>GDAL</li>
          <li><i class="tri"></i><svg><use href="#t-grass"/></svg>GRASS</li>
          <li><i class="tri"></i><svg><use href="#t-qneat"/></svg>QNEAT3 - Qgis Network Analysis Toolbox</li>
        </ul>
      </div>
      <div class="tabs"><button class="cur">공간 처리 툴박스</button><button>레이어 스타일 작업</button></div>
      <i class="dots vert edge"></i>
    </aside>
  </main>

  <footer class="status">
    <label class="locator"><svg><use href="#search"/></svg><input type="text" placeholder="위치를 찾으려면 입력하십시오 (⌘K)" aria-label="위치 찾기"></label>
    <span class="msg">범례 항목 1 개를 제거했습니다.</span>
    <div class="pair"><label for="co">좌표</label><input id="co" class="w184" type="text" value="273726,4279089"></div>
    <svg class="mouse" viewBox="0 0 26 28"><path d="M4 3l8 12" stroke="#111" stroke-width="9"/><path d="M4 3l6 10M9 1l5 10" stroke="#eee" stroke-width="2"/><circle cx="15" cy="18" r="8" fill="#eee" stroke="#111" stroke-width="2"/><circle cx="14" cy="20" r="4" fill="#111"/><circle cx="14" cy="20" r="2" fill="#eee"/></svg>
    <div class="pair"><label for="sc">축척</label><span class="combo"><input id="sc" type="text" value="1:867625"><button aria-label="축척 목록"></button></span></div>
    <svg class="lock" viewBox="0 0 22 26"><path d="M5 13V7c0-7 12-7 12 0v6" fill="none" stroke="#888" stroke-width="3"/><rect x="1" y="12" width="20" height="13" rx="1" fill="#777"/></svg>
    <div class="pair"><label for="mg">확대경</label><span class="spin w153"><input id="mg" type="text" value="100%"><span class="ud"><button aria-label="증가"></button><button aria-label="감소"></button></span></span></div>
    <div class="pair rot"><label for="ro">회전</label><span class="spin w153"><input id="ro" type="text" value="0.0 °"><span class="ud"><button aria-label="증가"></button><button aria-label="감소"></button></span></span></div>
    <div class="pair render"><input type="checkbox" id="rd" checked><label for="rd">렌더링</label></div>
    <button class="crs"><svg viewBox="0 0 24 24"><circle cx="12" cy="12" r="11" fill="#aaa"/><path d="M1 12h22M12 1v22M3 6h18M3 18h18M7 2c-4 6-4 14 0 20M17 2c4 6 4 14 0 20" fill="none" stroke="#444"/></svg>EPSG:32652</button>
    <button class="bubble" aria-label="메시지"><svg viewBox="0 0 28 26"><path d="M14 1c17 0 17 18 6 20l4 5-9-5C-3 21-3 1 14 1z" fill="#777"/><circle cx="8" cy="11" r="2" fill="#fff"/><circle cx="14" cy="11" r="2" fill="#fff"/><circle cx="20" cy="11" r="2" fill="#fff"/></svg></button>
  </footer>

  <div class="dialog" role="dialog" aria-labelledby="dlg">
    <header class="dlg-title"><span class="lights color"><i></i><i></i><i></i></span><h2 id="dlg">래스터 계산기</h2></header>
    <form class="dlg-body">
      <div class="top">
        <section>
          <h3>래스터 밴드</h3>
          <div class="box bands"><ul><li>Band4 (Red)@1</li><li>Band5 (NIR)@1</li></ul></div>
        </section>
        <section>
          <h3>결과 레이어</h3>
          <div class="box cut result">
            <label class="check"><input type="checkbox">레이어를 디스크에 쓰는 대신 동적 래스터 생성</label>
            <div class="row out"><label for="ol">산출 레이어</label><span class="path"><input id="ol" type="text" value="그 포스팅/14.Landsat 9/Results/NDVI.tif"><button type="button" aria-label="지우기"><svg viewBox="0 0 22 18"><path d="M7 0h15v18H7L0 9z" fill="#b5b5b5"/><path d="M9 5l8 8M17 5l-8 8" stroke="#222" stroke-width="2"/></svg></button></span><button type="button" class="btn more">...</button></div>
            <div class="row fmt"><label for="of">산출 포맷</label><span class="select"><select id="of"><option>GeoTIFF</option></select></span></div>
            <h3>공간 범위</h3>
            <div class="box extent">
              <button type="button" class="btn">선택한 레이어 영역 사용</button>
              <div class="ext-grid">
                <div class="pair"><label for="x0">X 최소값</label><span class="spin"><input id="x0" type="text" value="172185.00000"><span class="ud"><button type="button" aria-label="증가"></button><button type="button" aria-label="감소"></button></span></span></div>
                <div class="pair"><label for="x1">X 최대값</label><span class="spin"><input id="x1" type="text" value="407115.00000"><span class="ud"><button type="button" aria-label="증가"></button><button type="button" aria-label="감소"></button></span></span></div>
                <div class="pair"><label for="y0">Y 최소값</label><span class="spin"><input id="y0" type="text" value="4030485.00000"><span class="ud"><button type="button" aria-label="증가"></button><button type="button" aria-label="감소"></button></span></span></div>
                <div class="pair"><label for="y1">Y 최대값</label><span class="spin"><input id="y1" type="text" value="4269015.00000"><span class="ud"><button type="button" aria-label="증가"></button><button type="button" aria-label="감소"></button></span></span></div>
              </div>
            </div>
            <h3 class="res-h">해상도</h3>
            <div class="box res">
              <div class="pair"><label for="cc">열</label><span class="spin"><input id="cc" type="text" value="7831"><span class="ud"><button type="button" aria-label="증가"></button><button type="button" aria-label="감소"></button></span></span></div>
              <div class="pair"><label for="rr">행</label><span class="spin"><input id="rr" type="text" value="7951"><span class="ud"><button type="button" aria-label="증가"></button><button type="button" aria-label="감소"></button></span></span></div>
            </div>
            <div class="row crsrow"><label for="oc">산출물 좌표계</label><span class="select"><select id="oc"><option>EPSG:32652 - WGS 84 / UTM zone 52N</option></select></span>
              <svg class="warn" viewBox="0 0 36 34"><path d="M18 1l17 32H1z" fill="#ffd800" stroke="#e8481c" stroke-width="2"/><path d="M16 10h5l-1 14h-3z" fill="#a83c14"/><circle cx="18" cy="28" r="2" fill="#a83c14"/></svg>
              <button type="button" class="btn pick" aria-label="좌표계 선택"><svg viewBox="0 0 26 26"><circle cx="13" cy="12" r="11" fill="#bcd6ea"/><path d="M2 12h22M13 1v22M4 6h18M4 18h18M8 2c-4 6-4 14 0 20M18 2c4 6 4 14 0 20" fill="none" stroke="#58708a"/><rect x="14" y="13" width="12" height="12" rx="2" fill="#c9a000"/><path d="M17 22l6-6" stroke="#fff" stroke-width="3"/></svg></button></div>
            <label class="check last"><input type="checkbox" checked>프로젝트에 산출물 추가</label>
          </div>
          <i class="dots vert mid"></i>
        </section>
      </div>
      <div class="vgap"><i class="dots"></i></div>
      <h3 class="ops-h"><svg viewBox="0 0 18 12"><path d="M1 1h16l-8 10z" fill="none" stroke="#0c0c0c" stroke-width="2"/></svg>연산자</h3>
      <div class="box cut ops">
        <button type="button" class="btn">+</button><button type="button" class="btn">*</button><button type="button" class="btn">(</button><button type="button" class="btn">min</button><button type="button" class="btn">IF</button><button type="button" class="btn">cos</button><button type="button" class="btn">acos</button>
        <button type="button" class="btn">-</button><button type="button" class="btn">/</button><button type="button" class="btn">)</button><button type="button" class="btn">max</button><button type="button" class="btn">AND</button><button type="button" class="btn">sin</button><button type="button" class="btn">asin</button>
        <button type="button" class="btn">&lt;</button><button type="button" class="btn">&gt;</button><button type="button" class="btn">=</button><button type="button" class="btn">abs</button><button type="button" class="btn">OR</button><button type="button" class="btn">tan</button><button type="button" class="btn">atan</button>
        <button type="button" class="btn">&lt;=</button><button type="button" class="btn">&gt;=</button><button type="button" class="btn">!=</button><button type="button" class="btn">^</button><button type="button" class="btn">sqrt</button><button type="button" class="btn">log10</button><button type="button" class="btn">ln</button>
      </div>
      <h3 class="expr-h"><label for="ex">래스터 계산기 표현식</label></h3>
      <div class="box cut expr"><textarea id="ex" spellcheck="false">("Band5 (NIR)@1" - "Band4 (Red)@1") / ("Band5 (NIR)@1" + "Band4 (Red)@1")</textarea></div>
      <p class="valid">표현식이 무결합니다</p>
      <div class="actions"><button type="button" class="btn help">Help</button><button type="button" class="btn">Cancel</button><button type="button" class="btn ok">OK</button></div>
    </form>
  </div>
</div>
</body>
</html>
```
FILE: styles.css
```css
* { box-sizing: border-box; }
body { margin: 0; background: #fff; color: #e0e0e0; font: 500 21px/30px Inter, "Noto Sans CJK KR", "DejaVu Sans", sans-serif; }
h1, h2, h3, p, ul { margin: 0; padding: 0; font-weight: 500; font-size: 21px; }
ul { list-style: none; }
button, input, select, textarea { font: inherit; color: inherit; background: none; border: 0; margin: 0; padding: 0; outline: 0; border-radius: 0; }
svg { display: block; flex: none; }
.defs { position: absolute; width: 0; height: 0; }

.app { position: relative; display: flex; flex-direction: column; min-height: 100vh; background: #323232; border-radius: 26px; overflow: hidden; border-left: 1px solid #555; border-right: 1px solid #484848; }

.titlebar { height: 46px; background: #2a2a28; border-bottom: 1px solid #000; display: flex; align-items: center; position: relative; }
.titlebar h1 { flex: 1; text-align: center; color: #858585; font-weight: 600; padding-right: 118px; }
.lights { display: flex; gap: 13px; padding-left: 13px; width: 115px; }
.lights i { width: 20px; height: 20px; border-radius: 50%; background: #51504e; }
.color i:nth-child(1) { background: #ff5f57; }
.color i:nth-child(2) { background: #5d5b59; }
.color i:nth-child(3) { background: #28c840; }

.toolbar { height: 64px; display: flex; align-items: center; background: linear-gradient(#363636, #303030); border-bottom: 1px solid #555; box-shadow: inset 0 -1px #222; }
.toolbar.second { height: 67px; border-bottom: 2px solid #272727; box-shadow: none; }
.toolbar svg { width: 40px; height: 40px; }
.toolbar button { display: flex; align-items: center; justify-content: center; height: 52px; position: relative; }
.toolbar svg.grip { width: 10px; height: 30px; margin: 0 3px 0 6px; }
.toolbar svg.wide { margin: 0 3px 0 13px; }
.tools { display: grid; grid-auto-flow: column; grid-auto-columns: 1fr; flex: none; }
.t6 { width: 333px; }
.t7 { width: 385px; margin-left: 2px; }
.t16 { width: 885px; }
.t4 { width: 224px; }
.toolbar .on { border: 1px solid #1d1d1d; border-radius: 4px; box-shadow: inset 0 0 0 1px #4a4a4a; background: #2d2d2d; margin: 0 2px; }
.off svg { opacity: .38; }
.toolbar .one { width: 55px; flex: none; }
.toolbar .split { width: 75px; flex: none; justify-content: flex-start; padding-left: 8px; }
.split::after, .split2::after, .menu::after { content: ""; border: 7px solid transparent; border-top: 10px solid #b0b0b0; border-bottom: 0; margin-left: 9px; }
.menu::after, .dock-tools .menu::after { position: absolute; right: 2px; bottom: 4px; border-width: 6px; border-top-width: 7px; border-bottom: 0; margin: 0; }
.toolbar .far { margin-left: 1129px; }

.work { flex: 1; display: grid; grid-template-columns: 499px 1fr 720px; }
.dock { display: flex; flex-direction: column; position: relative; padding: 0 13px 0 1px; }
.dock.right { padding: 0 1px 0 12px; }
.dock-title { height: 29px; display: flex; align-items: center; gap: 6px; padding-left: 5px; }
.left .dock-title { padding-right: 1px; }
.dock-title h2 { flex: 1; font-size: 18px; }
.dock-title svg { width: 18px; height: 18px; }
.dock-tools { height: 54px; display: flex; align-items: center; gap: 2px; padding-left: 5px; }
.dock-tools button { width: 40px; height: 40px; display: flex; align-items: center; justify-content: center; position: relative; flex: none; }
.dock-tools svg { width: 28px; height: 28px; }
.dock-tools .split2 { width: 61px; }
.split2::after { border-width: 6px; border-top-width: 8px; border-bottom: 0; margin-left: 5px; }
.sep { width: 1px; height: 26px; background: #262626; margin: 0 4px; }
.right .dock-tools { height: 53px; }
.browser { height: 601px; display: flex; background: #1e1e1e; border-top: 1px solid #262626; overflow: hidden; flex: none; }
.tree { display: grid; grid-auto-rows: 1fr; white-space: nowrap; }
.rows20 { width: 417px; height: 603px; margin-right: auto; }
.rows27 { height: 814px; }
.tree li { display: flex; align-items: center; padding-left: 8px; }
.tree li svg { width: 26px; height: 26px; margin: 0 11px 0 14px; }
.tree .child { padding-left: 35px; }
.tree i { width: 10px; }
.tri::before { content: ""; display: block; width: 0; border: 7px solid transparent; border-left: 8px solid #a8a8a8; border-right: 0; }
.tri.open::before { border: 7px solid transparent; border-top: 8px solid #b0b0b0; border-bottom: 0; margin-left: -3px; }
.sel { background: #454545; color: #fff; }
.scroll { width: 23px; display: flex; flex-direction: column; background: #2b2b2b; }
.scroll button { height: 22px; background: #3c3c3c; border: 1px solid #505050; display: flex; align-items: center; justify-content: center; }
.scroll .up::before, .scroll .down::before { content: ""; border: 6px solid transparent; border-bottom: 7px solid #b0b0b0; border-top: 0; }
.scroll .down::before { border-bottom: 0; border-top: 7px solid #b0b0b0; }
.thumb { height: 389px; margin: 1px 0 auto; background: #404040; border: 1px solid #555; }
.hsplit { height: 12px; display: flex; align-items: center; justify-content: center; }
.dots { width: 30px; height: 4px; background: repeating-linear-gradient(90deg, #8a8a8a 0 4px, transparent 4px 5px); }
.dots.vert { width: 4px; height: 30px; background: repeating-linear-gradient(#8a8a8a 0 3px, transparent 3px 5px); position: absolute; }
.left .edge { right: 4px; top: 730px; }
.right .edge { left: 6px; top: 730px; }
.layers { flex: 1; background: #1e1e1e; border-top: 1px solid #262626; }
.layers li { height: 30px; display: flex; align-items: center; padding-left: 12px; font-weight: 700; }
.layers svg { width: 22px; height: 22px; margin: 0 12px 0 13px; }
.layers .tri { width: 27px; }
.layers u { text-underline-offset: 4px; }
input[type=checkbox] { appearance: none; width: 23px; height: 23px; background: #1e1e1e; border: 1px solid #272727; flex: none; position: relative; }
input[type=checkbox]:checked::after { content: ""; position: absolute; left: 7px; top: 2px; width: 6px; height: 12px; border: solid #d5d5d5; border-width: 0 2px 2px 0; transform: rotate(38deg); }

.canvas { background: #fff; border-left: 1px solid #777; border-right: 1px solid #888; overflow: hidden; position: relative; }
.canvas svg { width: 100%; height: 100%; position: absolute; }

.search { height: 39px; background: #1e1e1e; border: 1px solid #292929; border-radius: 4px; display: flex; align-items: center; padding-left: 11px; gap: 12px; }
.search svg, .locator svg { width: 24px; height: 24px; }
.search input, .locator input { flex: 1; min-width: 0; }
.search input::placeholder { font-style: italic; color: #666; }
.toolbox { flex: 1; background: #1e1e1e; margin-top: 1px; padding-top: 1px; border: 1px solid #2b2b2b; border-top-color: #383838; }
.rows27 li { padding-left: 13px; }
.tabs { height: 46px; display: flex; align-items: flex-start; gap: 3px; padding-top: 1px; }
.tabs button { height: 42px; padding: 0 17px; border: 1px solid #4a4a4a; border-top-color: #2a2a2a; border-radius: 0 0 4px 4px; background: #2b2b2b; }
.tabs .cur { height: 45px; background: #323232; }

.status { height: 50px; display: flex; align-items: center; padding: 4px 11px 0 6px; background: #2e2e2e; font-size: 19px; }
.locator { width: 557px; height: 40px; background: #1e1e1e; border-radius: 4px; display: flex; align-items: center; gap: 12px; padding-left: 12px; }
.locator input::placeholder { color: #999; }
.msg { font-size: 18px; margin: 0 auto 0 14px; color: #eee; }
.pair { display: flex; align-items: center; gap: 4px; }
.status label { font-size: 18px; }
.status .locator { font-size: 21px; font-weight: 400; }
.status input[type=text] { height: 36px; }
.w184 { width: 184px; background: #1e1e1e; border-radius: 4px; padding-left: 13px; }
.mouse { width: 26px; height: 28px; margin: 0 22px 0 8px; }
.combo { width: 153px; height: 37px; background: #1e1e1e; border-radius: 4px; display: flex; overflow: hidden; }
.combo input { flex: 1; min-width: 0; width: 0; padding-left: 6px; }
.combo button { width: 32px; background: #404040; border: 1px solid #4c4c4c; display: flex; align-items: center; justify-content: center; }
.combo button::before { content: ""; border: 6px solid transparent; border-top: 8px solid #151515; border-bottom: 0; }
.lock { width: 22px; height: 26px; margin: 0 16px 0 21px; }
.spin { display: flex; flex: 1; min-width: 0; height: 35px; background: #1e1e1e; border: 1px solid #292929; border-radius: 4px; overflow: hidden; }
.spin input { flex: 1; width: 0; min-width: 0; padding-left: 8px; }
.ud { width: 23px; background: linear-gradient(#484848, #3c3c3c); border: 1px solid #505050; border-radius: 0 4px 4px 0; display: flex; flex-direction: column; margin-left: 4px; }
.ud button { flex: 1; display: flex; align-items: center; justify-content: center; }
.ud button::before { content: ""; border: 6px solid transparent; border-bottom: 7px solid #b5b5b5; border-top: 0; }
.ud button + button::before { border-bottom: 0; border-top: 7px solid #b5b5b5; }
.w153 { width: 153px; flex: none; }
.rot { margin-left: 16px; gap: 15px; }
.render { margin-left: 13px; gap: 8px; }
.crs { display: flex; align-items: center; gap: 4px; color: #0c0c0c; margin-left: 27px; font-size: 18px; }
.crs svg { width: 24px; height: 24px; }
.bubble { margin-left: 39px; }
.bubble svg { width: 28px; height: 26px; }

.dialog { position: absolute; left: calc(50% - 572px); top: 87px; width: 1110px; background: #313131; border-radius: 20px; border: 1px solid #6a6a6a; box-shadow: 0 0 0 1px #111, 0 36px 76px rgba(0, 0, 0, .66); overflow: hidden; }
.dlg-title { height: 47px; display: flex; align-items: center; background: #3a3836; border-bottom: 1px solid #000; }
.dlg-title h2 { flex: 1; text-align: center; color: #b8b6b4; padding-right: 118px; line-height: 28px; padding-bottom: 2px; }
.dlg-body { padding: 18px 16px 19px 18px; display: flex; flex-direction: column; }
.top { display: grid; grid-template-columns: 396px minmax(0, 1fr); gap: 9px; }
.top > section { position: relative; display: flex; flex-direction: column; min-width: 0; }
h3 { height: 30px; margin: 0 0 4px 2px; }
.box { border: 1px solid #3f3f3f; border-radius: 4px; }
.cut { border-right: 0; border-radius: 4px 0 0 4px; }
.bands { height: 659px; padding: 17px 20px 17px 17px; }
.bands ul { height: 100%; background: #1e1e1e; padding: 0 7px; border-top: 1px solid #292929; }
.bands li { height: 27px; line-height: 27px; }
.result { height: 659px; padding: 23px 8px 0 18px; display: flex; flex-direction: column; }
.check { display: flex; align-items: center; gap: 9px; height: 23px; }
.check.last { margin-top: 19px; }
.row { display: flex; align-items: center; height: 37px; margin-top: 13px; }
.row > label { width: 164px; flex: none; }
.row.out { margin-top: 18px; height: 38px; }
.row.crsrow { margin-top: 12px; }
.path { flex: 1; min-width: 0; height: 38px; display: flex; align-items: center; background: #1e1e1e; border-radius: 4px; padding-right: 12px; gap: 4px; }
.path input { flex: 1; width: 0; min-width: 0; }
.path svg { width: 22px; height: 18px; }
.btn { height: 37px; color: #080808; background: linear-gradient(#484848, #3b3b3b); border: 1px solid #262626; border-radius: 4px; box-shadow: inset 0 0 0 1px #545454; text-align: center; }
.more { width: 37px; height: 30px; line-height: 24px; margin-left: 12px; }
.select { flex: 1; min-width: 0; height: 37px; position: relative; background: linear-gradient(#484848, #3b3b3b); border: 1px solid #262626; border-radius: 4px; box-shadow: inset 0 0 0 1px #545454; }
.select select { appearance: none; width: 100%; height: 100%; color: #080808; padding: 0 36px 0 7px; }
.select::after { content: ""; position: absolute; right: 11px; top: 14px; border: 6px solid transparent; border-top: 8px solid #151515; border-bottom: 0; }
.result h3 { margin-top: 12px; }
.result .res-h { margin-top: 10px; }
.result .box { margin-left: 2px; }
.extent { height: 178px; padding: 17px 19px 0 17px; }
.extent .btn { height: 38px; padding: 0 5px; }
.ext-grid { display: grid; grid-template-columns: 1fr 1fr; gap: 15px 22px; margin-top: 15px; }
.ext-grid .pair { gap: 0; min-width: 0; }
.ext-grid label { width: 88px; flex: none; }
.res { height: 78px; padding: 20px 19px 0 17px; display: flex; justify-content: space-between; align-items: flex-start; }
.res .pair { gap: 0; }
.res label { width: 31px; }
.res .spin { width: 168px; flex: none; }
.warn { width: 36px; height: 34px; margin: 0 10px; }
.pick { width: 38px; display: flex; align-items: center; justify-content: center; }
.pick svg { width: 26px; height: 26px; }
.dots.mid { left: -6px; top: 336px; }
.vgap { height: 8px; display: flex; align-items: center; justify-content: center; padding-left: 18px; }
.ops-h { display: flex; align-items: center; gap: 15px; }
.ops-h svg { width: 18px; height: 12px; }
.ops { height: 213px; padding: 18px 0 0 4px; display: grid; grid-template-columns: repeat(7, 131px); gap: 13px; align-content: start; }
.ops .btn { height: 38px; margin-bottom: -1px; }
.expr-h { margin-top: 11px; }
.expr { height: 319px; padding: 18px 0 0 3px; }
.expr textarea { display: block; width: 100%; height: 299px; background: #1e1e1e; border-top: 1px solid #292929; padding: 5px 8px; resize: none; }
.valid { margin: 12px 0 13px; }
.actions { display: flex; gap: 11px; }
.actions .btn { width: 132px; }
.actions .help { margin-right: auto; }
.actions .ok { width: 135px; border-color: #1c3d5e; box-shadow: inset 0 0 0 2px #3f7fbf; }
```
